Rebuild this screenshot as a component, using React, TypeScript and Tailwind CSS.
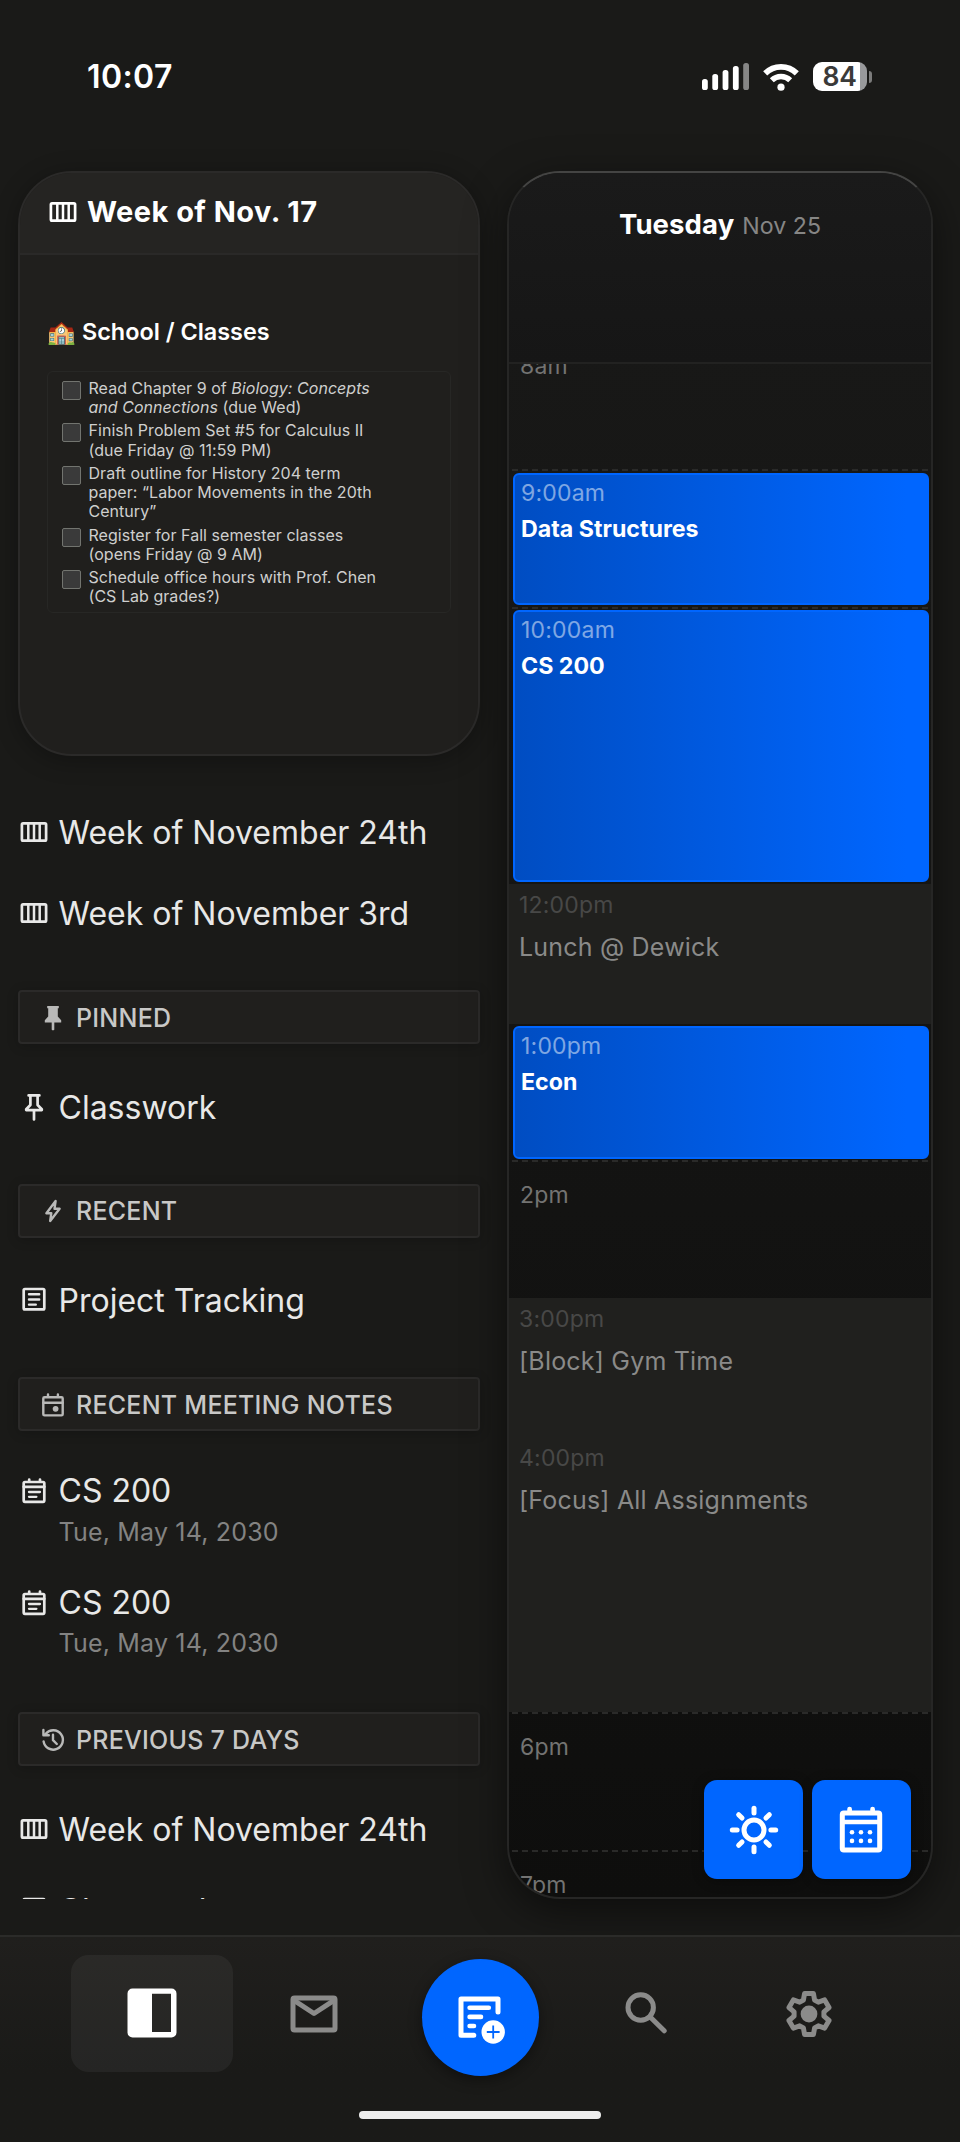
import type { ReactNode } from "react";

type IconProps = { className?: string };

/* ---------- small list icons, all on a 32px grid ---------- */
function Glyph({ children, className = "" }: { children: ReactNode; className?: string }) {
  return (
    <svg viewBox="0 0 32 32" className={`h-8 w-8 shrink-0 ${className}`} fill="none" stroke="currentColor" strokeWidth="2.7" strokeLinecap="round" strokeLinejoin="round">
      {children}
    </svg>
  );
}

function WeekIcon() {
  return (
    <Glyph>
      <rect x="3.9" y="7.4" width="24.2" height="17.2" rx="1.2" />
      <path d="M10.3 8v16M16 8v16M21.7 8v16" strokeWidth="2.5" />
    </Glyph>
  );
}

function PinFilledIcon() {
  return (
    <Glyph>
      <path d="M10.2 4h11.6v2.3h-1v8.2l3.4 3.7v2.4h-6.9v7.2L16 28.6l-1.3-0.8v-7.2H7.8v-2.4l3.4-3.7V6.3h-1z" fill="currentColor" stroke="none" />
    </Glyph>
  );
}

function PinIcon() {
  return (
    <Glyph>
      <path d="M10.6 4.4h10.8M12.4 4.8v9.2l-4.2 4.2v0.9h15.6v-0.9l-4.2-4.2V4.8M16 19.4v9" />
    </Glyph>
  );
}

function BoltIcon() {
  return (
    <Glyph>
      <path d="M18.6 6L9.4 18.2h4.9L13.2 26l9.4-12.2h-5.1z" strokeWidth="2.4" />
    </Glyph>
  );
}

function NoteIcon() {
  return (
    <Glyph>
      <rect x="5.7" y="5" width="20.6" height="20.4" rx="1.2" />
      <path d="M11 10.2h10.2M11 15.5h10.2M11 20.6h6.8" strokeWidth="2.4" />
    </Glyph>
  );
}

function EventIcon() {
  return (
    <Glyph>
      <rect x="6.3" y="8.2" width="19.4" height="18.2" rx="1.2" strokeWidth="2.4" />
      <path d="M6.3 13.8h19.4M11 5.4v2.4M20.9 5.4v2.4" strokeWidth="2.4" />
      <circle cx="18.6" cy="19.8" r="2.9" fill="currentColor" stroke="none" />
    </Glyph>
  );
}

function MeetingIcon() {
  return (
    <Glyph>
      <rect x="5.7" y="7" width="20.6" height="19.8" rx="1.2" />
      <path d="M5.7 11.8h20.6M11.2 4.5v2M22 4.5v2" />
      <path d="M11 17h11M11 21.8h7.4" strokeWidth="2.3" />
    </Glyph>
  );
}

function HistoryIcon() {
  return (
    <Glyph>
      <path d="M6.6 17.4a9.7 9.7 0 1 0 2.2-7.7M6.4 6v5.2h5.4M16 10.8v5.4l3.8 3.8" strokeWidth="2.4" />
    </Glyph>
  );
}

/* ---------- status bar ---------- */
function StatusBar() {
  const bars = [11, 16, 20, 24, 27];
  return (
    <div className="flex h-[171px] shrink-0 items-start justify-between pt-[56px] pr-[88px] pl-[87px]">
      <div className="pt-px text-[32px] leading-[40px] font-semibold tracking-[0.4px] text-white">10:07</div>
      <div className="flex h-[41px] items-center gap-[14px]">
        <svg viewBox="0 0 47 27" className="h-[27px] w-[47px]">
          {bars.map((h, i) => (
            <rect key={h} x={i * 10.3} y={27 - h} width="5.8" height={h} rx="2.6" fill={i === 4 ? "#868685" : "#fff"} />
          ))}
        </svg>
        <svg viewBox="0 0 36 28" className="h-7 w-9" fill="none" stroke="#fff">
          <path d="M2.2 10.4a22.5 22.5 0 0 1 31.6 0" strokeWidth="5.8" />
          <path d="M8.8 17.3a13.2 13.2 0 0 1 18.4 0" strokeWidth="5.6" />
          <circle cx="18" cy="24.2" r="3.6" fill="#fff" stroke="none" />
        </svg>
        <div className="flex items-center gap-[2px]">
          <div className="flex h-[29px] w-[54px] items-center rounded-[9px] bg-linear-to-r from-white from-[87%] to-[#98999b] to-[87%] pl-[9.5px] text-[26.5px] leading-[29px] font-semibold tracking-[-0.3px] text-[#3a3a39]">
            84
          </div>
          <div className="h-[12px] w-[3px] rounded-r-[3px] bg-[#7c7c7b]" />
        </div>
      </div>
    </div>
  );
}

/* ---------- left column ---------- */
const TODOS: ReactNode[] = [
  <>
    Read Chapter 9 of <em>Biology: Concepts<br />and Connections</em> (due Wed)
  </>,
  <>
    Finish Problem Set #5 for Calculus II<br />(due Friday @ 11:59 PM)
  </>,
  <>
    Draft outline for History 204 term<br />paper: “Labor Movements in the 20th<br />Century”
  </>,
  <>
    Register for Fall semester classes<br />(opens Friday @ 9 AM)
  </>,
  <>
    Schedule office hours with Prof. Chen<br />(CS Lab grades?)
  </>,
];

function WeekCard() {
  return (
    <div className="h-[585px] shrink-0 overflow-hidden rounded-[54px] border-2 border-[#2b2a29] bg-[#201f1d] shadow-[0_4px_24px_rgba(0,0,0,0.3)]">
      <div className="flex h-[82px] items-center gap-[8.5px] border-b-2 border-[#2a2928] bg-[#252422] pb-[3px] pl-[26.5px] text-[29px] font-bold tracking-[0.45px] text-white">
        <WeekIcon />
        Week of Nov. 17
      </div>
      <div className="pt-[63px] pr-[27px] pl-[27px]">
        <div className="flex items-center text-[23.4px] leading-[28px] font-semibold text-white">
          <span className="mr-[7px] w-[28px] text-[23px]">🏫</span>
          School / Classes
        </div>
        <ul className="mt-[25px] flex h-[242px] flex-col gap-[4.3px] rounded-[6px] border border-[#272725] pt-[7px] pl-[13.5px]">
          {TODOS.map((t, i) => (
            <li key={i} className="flex gap-[8px] text-[16px] leading-[19.1px] tracking-[0.04px] text-[#cfcfce]">
              <span className="mt-[2px] h-[19px] w-[19px] shrink-0 rounded-[2px] border border-[#72746f] bg-[#3a3a3a]" />
              <span className="whitespace-nowrap">{t}</span>
            </li>
          ))}
        </ul>
      </div>
    </div>
  );
}

function Row({ icon, label }: { icon: ReactNode; label: string }) {
  return (
    <div className="-ml-[0.5px] flex h-[81px] shrink-0 items-center gap-[9px] text-[32px] whitespace-nowrap text-[#e8e8e7]">
      {icon}
      <span className="pt-[2px]">{label}</span>
    </div>
  );
}

function MeetingRow({ title, date }: { title: string; date: string }) {
  return (
    <div className="shrink-0">
      <div className="-ml-[0.5px] flex items-center gap-[9px] text-[32px] leading-[40px] text-[#e8e8e7]">
        <MeetingIcon />
        {title}
      </div>
      <div className="mt-[5.5px] pl-[40.5px] text-[25px] leading-[30px] tracking-[0.18px] text-[#838382]">{date}</div>
    </div>
  );
}

function Section({ icon, label }: { icon: ReactNode; label: string }) {
  return (
    <div className="flex h-[54px] shrink-0 items-center gap-[7px] rounded-[4px] border-2 border-[#2b2a29] bg-[#201f1d] pt-px pl-[17px] text-[25px] font-medium tracking-[0.25px] text-[#c8c8c7] shadow-[0_2px_12px_rgba(0,0,0,0.2)]">
      <span className="text-[#b9b9b8]">{icon}</span>
      <span className="pt-[2px]">{label}</span>
    </div>
  );
}

function Sidebar() {
  return (
    <div className="-mx-[18px] h-[1728px] w-[498px] shrink-0 px-[18px] [clip-path:inset(-40px_0_0_0)]">
      <div className="flex h-full flex-col">
        <WeekCard />
        <div className="mt-[35.5px] shrink-0">
          <Row icon={<WeekIcon />} label="Week of November 24th" />
          <Row icon={<WeekIcon />} label="Week of November 3rd" />
        </div>
        <div className="mt-[36.5px] shrink-0">
          <Section icon={<PinFilledIcon />} label="PINNED" />
          <div className="h-[22px]" />
          <Row icon={<PinIcon />} label="Classwork" />
        </div>
        <div className="mt-[36.5px] shrink-0">
          <Section icon={<BoltIcon />} label="RECENT" />
          <div className="h-[22px]" />
          <Row icon={<NoteIcon />} label="Project Tracking" />
        </div>
        <div className="mt-[36.5px] shrink-0">
          <Section icon={<EventIcon />} label="RECENT MEETING NOTES" />
          <div className="mt-[40px] flex flex-col gap-[36px]">
            <MeetingRow title="CS 200" date="Tue, May 14, 2030" />
            <MeetingRow title="CS 200" date="Tue, May 14, 2030" />
          </div>
        </div>
        <div className="mt-[54px] shrink-0">
          <Section icon={<HistoryIcon />} label="PREVIOUS 7 DAYS" />
          <div className="h-[22.5px]" />
          <Row icon={<WeekIcon />} label="Week of November 24th" />
          <Row icon={<NoteIcon />} label="Classwork" />
        </div>
      </div>
    </div>
  );
}

/* ---------- day timeline ---------- */
function Dash() {
  return <div className="mx-[3px] h-[2px] shrink-0 bg-[repeating-linear-gradient(90deg,#2a2a29_0_6px,transparent_6px_10px)]" />;
}

function Busy({ time, title, className }: { time: string; title: string; className: string }) {
  return (
    <div className={`mr-[2px] ml-[4px] shrink-0 rounded-[6px] border-2 border-[#0066ff] bg-linear-to-r from-[#004dc2] to-[#0066ff] to-95% pt-[3.5px] pl-[6px] ${className}`}>
      <div className="text-[23px] leading-[28px] tracking-[0.2px] text-white/50">{time}</div>
      <div className="mt-[8px] text-[23.2px] leading-[28px] font-bold text-white">{title}</div>
    </div>
  );
}

function Block({ time, title, className }: { time: string; title: string; className: string }) {
  return (
    <div className={`shrink-0 bg-[#20201e] pt-[7px] pl-[10px] ${className}`}>
      <div className="text-[23px] leading-[28px] tracking-[0.2px] text-[#484847]">{time}</div>
      <div className="mt-[12.5px] text-[25px] leading-[30px] tracking-[0.2px] text-[#8a8a89]">{title}</div>
    </div>
  );
}

function Free({ label, className }: { label: string; className: string }) {
  return <div className={`shrink-0 pl-[11px] text-[23px] leading-[28px] tracking-[0.2px] text-[#737372] ${className}`}>{label}</div>;
}

function SunIcon() {
  const rays = [0, 45, 90, 135, 180, 225, 270, 315];
  return (
    <svg viewBox="0 0 60 60" className="h-[60px] w-[60px]" fill="none" stroke="#fff" strokeWidth="5" strokeLinecap="round">
      <circle cx="30" cy="30" r="10" />
      {rays.map((r) => (
        <path key={r} d="M30 8.3v4.8" transform={`rotate(${r} 30 30)`} />
      ))}
    </svg>
  );
}

function MonthIcon() {
  return (
    <svg viewBox="0 0 60 60" className="mr-px h-[60px] w-[60px]" fill="none" stroke="#fff" strokeWidth="5" strokeLinecap="round" strokeLinejoin="round">
      <rect x="11.3" y="13" width="37.4" height="37" rx="1.5" />
      <path d="M12 22h36M18.6 9v3M41.6 9v3" strokeWidth="4.7" />
      {[32.2, 40.9].map((y) => [21, 30, 39].map((x) => <circle key={`${x}-${y}`} cx={x} cy={y} r="2.3" fill="#fff" stroke="none" />))}
    </svg>
  );
}

function DayPanel() {
  return (
    <div className="relative h-[1728px] w-[426px] shrink-0">
      <div className="flex h-full flex-col overflow-hidden rounded-[53px] border-2 border-[#262625] border-t-[#444443] bg-linear-to-b from-[#191918] via-[#131312] via-[60%] to-[#0e0e0d] shadow-[0_12px_40px_rgba(0,0,0,0.5)]">
        <div className="relative flex h-[191px] shrink-0 items-start justify-center border-b-2 border-[#222221] bg-linear-to-b from-[#1a1a1a] to-[#161616] pt-[34px] leading-[34px]">
          <div className="flex items-baseline gap-[8px]">
            <span className="text-[27.5px] font-bold tracking-[0.1px] text-white">Tuesday</span>
            <span className="text-[23.2px] text-[#868685]">Nov 25</span>
          </div>
        </div>
        <div className="flex grow flex-col overflow-hidden">
          <Free label="8am" className="-mt-[12.5px] h-[117.5px]" />
          <Dash />
          <Busy time="9:00am" title="Data Structures" className="my-[2px] h-[132px]" />
          <Dash />
          <Busy time="10:00am" title="CS 200" className="mt-px mb-[2px] h-[272px]" />
          <Block time="12:00pm" title="Lunch @ Dewick" className="h-[140px]" />
          <Busy time="1:00pm" title="Econ" className="mt-[2px] mb-px h-[133px]" />
          <Dash />
          <Free label="2pm" className="h-[136px] pt-[19px]" />
          <Block time="3:00pm" title="[Block] Gym Time" className="h-[139px]" />
          <Block time="4:00pm" title="[Focus] All Assignments" className="h-[275px]" />
          <Dash />
          <Free label="6pm" className="h-[136px] pt-[18.5px]" />
          <Dash />
          <Free label="7pm" className="h-[60px] pt-[18.5px]" />
        </div>
      </div>
      {/* floating shortcuts over the timeline */}
      <div className="absolute right-[22px] bottom-[20px] flex gap-[9px]">
        <button className="grid h-[99px] w-[99px] place-items-center rounded-[13px] bg-[#0066ff] shadow-[0_2px_12px_rgba(0,0,0,0.35)]">
          <SunIcon />
        </button>
        <button className="grid h-[99px] w-[99px] place-items-center rounded-[13px] bg-[#0066ff] shadow-[0_2px_12px_rgba(0,0,0,0.35)]">
          <MonthIcon />
        </button>
      </div>
    </div>
  );
}

/* ---------- bottom navigation ---------- */
function SplitIcon({ className = "" }: IconProps) {
  return (
    <svg viewBox="0 0 54 54" className={`h-[54px] w-[54px] ${className}`} fill="#fff" fillRule="evenodd">
      <path d="M7.5 2.5h39a5 5 0 0 1 5 5v39a5 5 0 0 1-5 5h-39a5 5 0 0 1-5-5v-39a5 5 0 0 1 5-5zM27 7.8v38.2h19V7.8z" />
    </svg>
  );
}

function MailIcon({ className = "" }: IconProps) {
  return (
    <svg viewBox="0 0 54 54" className={`h-[54px] w-[54px] ${className}`} fill="none" stroke="#8b8b8a" strokeWidth="5">
      <rect x="6" y="11" width="42" height="32" rx="1.5" />
      <path d="M7 13.3l20 13.2 20-13.2" strokeLinejoin="round" />
    </svg>
  );
}

function NewNoteIcon() {
  return (
    <svg viewBox="0 0 60 60" className="h-[60px] w-[60px]" fill="none" stroke="#fff" strokeWidth="5" strokeLinecap="round" strokeLinejoin="round">
      <path d="M48 24V11H11v36.2h12.8" />
      <path d="M19.6 19.8h19.2M19.6 28.9h11.4M19.6 38h4.4" strokeWidth="4.6" />
      <circle cx="43.2" cy="44" r="11.7" fill="#fff" stroke="none" />
      <path d="M43.2 37.6v12.8M36.8 44h12.8" stroke="#0066ff" strokeWidth="1.8" strokeLinecap="butt" />
    </svg>
  );
}

function SearchIcon({ className = "" }: IconProps) {
  return (
    <svg viewBox="0 0 54 54" className={`h-[54px] w-[54px] ${className}`} fill="none" stroke="#8b8b8a" strokeWidth="5" strokeLinecap="round">
      <circle cx="21.7" cy="21.5" r="12.7" />
      <path d="M31.2 31l14 13.8" />
    </svg>
  );
}

// one tooth, repeated six times around the centre
const TOOTH = [
  [-5.6, -14],
  [-4.4, -20.6],
  [4.4, -20.6],
  [5.6, -14],
];
const GEAR = [0, 60, 120, 180, 240, 300]
  .flatMap((deg) => {
    const a = (deg * Math.PI) / 180;
    return TOOTH.map(([x, y]) => `${(27 + x * Math.cos(a) - y * Math.sin(a)).toFixed(2)},${(27 + x * Math.sin(a) + y * Math.cos(a)).toFixed(2)}`);
  })
  .join(" ");

function GearIcon() {
  return (
    <svg viewBox="0 0 54 54" className="ml-px h-[54px] w-[54px]" fill="none" stroke="#8b8b8a" strokeWidth="5" strokeLinejoin="round">
      <polygon points={GEAR} />
      <circle cx="27" cy="27" r="8.4" fill="#8b8b8a" stroke="none" />
    </svg>
  );
}

function BottomNav() {
  return (
    <div className="relative flex h-[207px] shrink-0 flex-col items-center border-t-2 border-[#2b2b29] bg-linear-to-b from-[#201f1d] to-[#1a1a18] to-65%">
      <div className="flex h-[135px] w-full items-start justify-between px-[71px] pt-[18px]">
        <button className="grid h-[117px] w-[162px] place-items-center rounded-[18px] bg-white/5">
          <SplitIcon className="mr-px mb-[2px]" />
        </button>
        <button className="grid h-[117px] w-[162px] place-items-center">
          <MailIcon className="mr-[5px]" />
        </button>
        <div className="flex w-[162px] justify-center pt-[4px]">
          <button className="grid h-[117px] w-[117px] place-items-center rounded-full bg-[#0066ff] shadow-[0_4px_14px_rgba(0,0,0,0.4)]">
            <NewNoteIcon />
          </button>
        </div>
        <button className="grid h-[117px] w-[162px] place-items-center">
          <SearchIcon className="mb-[2px] ml-[4px]" />
        </button>
        <button className="grid h-[117px] w-[162px] place-items-center">
          <GearIcon />
        </button>
      </div>
      <div className="mt-[39px] h-[8px] w-[242px] rounded-full bg-[#ededed]" />
    </div>
  );
}

export default function App() {
  return (
    <div className="flex h-[2142px] w-[960px] flex-col overflow-hidden bg-[#1a1a18] font-['Inter',sans-serif]">
      <StatusBar />
      <div className="flex h-[1764px] shrink-0 gap-[27px] px-[18px]">
        <Sidebar />
        <DayPanel />
      </div>
      <BottomNav />
    </div>
  );
}
